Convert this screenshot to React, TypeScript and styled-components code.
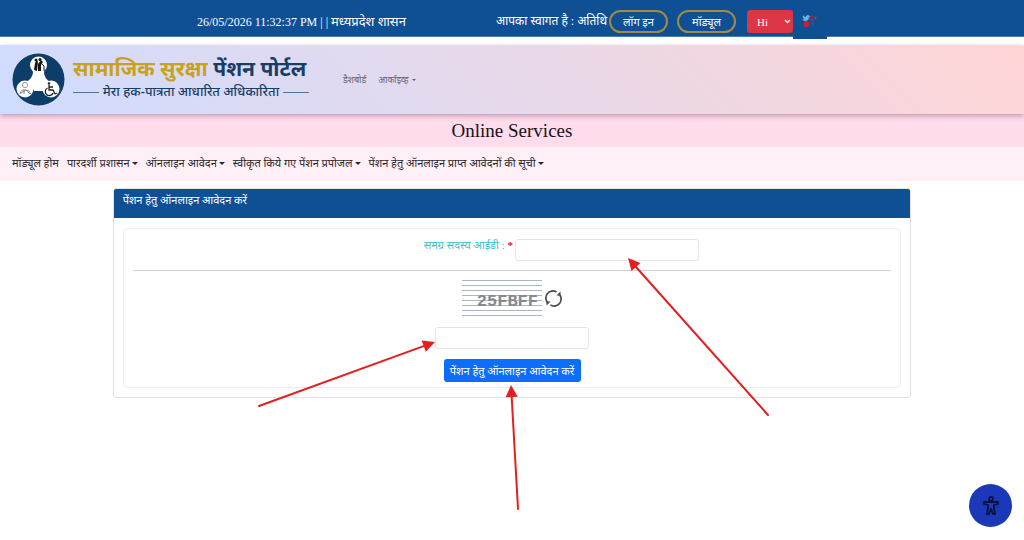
import React from "react";
import styled, { createGlobalStyle } from "styled-components";

const hindi = `"Noto Sans Devanagari", "Noto Sans", "Lohit Devanagari", sans-serif`;
const serif = `"Liberation Serif", "Noto Sans Devanagari", "Noto Sans", serif`;

const GlobalStyle = createGlobalStyle`
  *, *::before, *::after { box-sizing: border-box; }
  body { margin: 0; background: #fff; color: #212529; font-family: ${serif}; }
  button, input, select { font: inherit; margin: 0; }
`;

const Page = styled.div`
  position: relative;
  min-height: 100vh;
  overflow: hidden;
`;

const TopBar = styled.div`
  display: grid;
  grid-template-columns: 197fr 299fr 528fr;
  height: 37px;
  padding-top: 6px;
  background: #0f4f94;
  border-bottom: 1px solid #4b7cb0;
  color: #fff;
  font-size: 12px;
  white-space: nowrap;
`;

const Clock = styled.div`
  grid-column: 2;
  line-height: 31px;
`;

const StateName = styled.span`
  font-size: 13px;
`;

const Account = styled.div`
  display: flex;
  align-items: center;
  height: 31px;
`;

const Welcome = styled.span`
  width: 113px;
`;

const PillButton = styled.button`
  width: 59px;
  height: 23px;
  margin-right: 9px;
  padding: 0;
  border: 2px solid #a18a45;
  border-radius: 12px;
  background: transparent;
  color: #fff;
  font-size: 11px;
  line-height: 18px;
`;

const LanguageBox = styled.div`
  display: grid;
  align-items: center;
  margin-left: 2px;
  > * { grid-area: 1 / 1; }
  > svg { justify-self: end; margin-right: 2px; pointer-events: none; }
`;

const LanguageSelect = styled.select`
  appearance: none;
  width: 46px;
  height: 23px;
  padding: 0 10px;
  border: 0;
  border-radius: 3px;
  background: #dc3545;
  color: #fff;
  font-size: 11px;
`;

const Social = styled.a`
  align-self: flex-start;
  display: flex;
  justify-content: center;
  width: 34px;
  height: 33px;
  padding: 9px 0 0 0;
  background: #0f4f94;
`;

const Header = styled.header`
  display: flex;
  align-items: center;
  height: 69px;
  margin-top: 8px;
  padding: 0 12px;
  position: relative;
  background: linear-gradient(45deg, #cfdcff, #ffd5d5);
  box-shadow: 0 2px 5px rgba(80, 30, 60, 0.35);
`;

const Brand = styled.a`
  display: flex;
  align-items: center;
  width: 331px;
  color: #173e66;
  text-decoration: none;
`;

const BrandText = styled.span`
  display: flex;
  flex-direction: column;
  width: 236px;
  margin-left: 8px;
  font-family: ${hindi};
  white-space: nowrap;
`;

const BrandName = styled.span`
  font-size: 21px;
  font-weight: 700;
  line-height: 26px;
  em { color: #c8a11d; font-style: normal; }
`;

const Tagline = styled.span`
  display: flex;
  align-items: center;
  justify-content: space-between;
  gap: 4px;
  font-size: 13px;
  font-weight: 500;
  line-height: 18px;
  &::before, &::after { content: ""; flex: 1; height: 1px; background: #54739a; }
`;

const HeaderLinks = styled.nav`
  display: flex;
  gap: 12px;
  white-space: nowrap;
`;

const HeaderLink = styled.a<{ $menu?: boolean }>`
  display: flex;
  align-items: center;
  gap: 4px;
  color: #66616d;
  font-size: 9px;
  line-height: 14px;
  text-decoration: none;
  &::after {
    content: "";
    display: ${(p) => (p.$menu ? "block" : "none")};
    border: 2px solid transparent;
    border-top-color: currentColor;
    border-bottom: 0;
  }
`;

const Title = styled.h1`
  margin: 0;
  background: #ffdceb;
  color: #17121a;
  font-size: 19px;
  font-weight: 400;
  line-height: 33px;
  text-align: center;
`;

const MenuBar = styled.nav`
  display: flex;
  gap: 8px;
  height: 34px;
  padding: 0 12px;
  background: #fff0f7;
  white-space: nowrap;
`;

const MenuLink = styled.a<{ $menu?: boolean }>`
  display: flex;
  align-items: center;
  gap: 2px;
  color: #2b272b;
  font-size: 11px;
  line-height: 32px;
  height: 32px;
  text-decoration: none;
  &::after {
    content: "";
    display: ${(p) => (p.$menu ? "block" : "none")};
    border: 3px solid transparent;
    border-top-color: currentColor;
    border-bottom: 0;
  }
`;

const Card = styled.main`
  width: 78%;
  margin: 7px auto 0;
  border: 1px solid #e3e3e3;
  border-radius: 3px;
  overflow: hidden;
`;

const CardTitle = styled.h2`
  height: 29px;
  margin: 0;
  padding: 0 9px;
  background: #0f4f94;
  color: #fff;
  font-size: 11px;
  font-weight: 400;
  line-height: 23px;
`;

const Form = styled.form`
  display: flex;
  flex-direction: column;
  align-items: center;
  margin: 10px 9px 9px;
  padding: 10px 9px 5px;
  border: 1px solid #ececec;
  border-radius: 5px;
`;

const Field = styled.div`
  display: flex;
  align-items: flex-start;
  width: 100%;
  justify-content: center;
  padding: 0 0 9px 13%;
  margin-bottom: 9px;
  border-bottom: 1px solid #d0d0d2;
`;

const Label = styled.label`
  width: 91px;
  color: #3fc3d0;
  font-size: 11px;
  line-height: 12px;
  white-space: nowrap;
  b { color: #e0121b; }
`;

const TextBox = styled.input<{ $width: number }>`
  width: ${(p) => p.$width}px;
  height: 22px;
  padding: 0 6px;
  border: 1px solid #e2e5e9;
  border-radius: 3px;
  background: #fff;
  font-size: 11px;
`;

const CaptchaRow = styled.div`
  display: flex;
  align-items: center;
  gap: 3px;
  height: 36px;
  margin-bottom: 11px;
`;

const Captcha = styled.div`
  width: 80px;
  height: 36px;
  padding-right: 4px;
  background: repeating-linear-gradient(#a9b4c4 0 1px, transparent 1px 5px);
  color: #85888c;
  font: 700 17px/44px "Liberation Mono", monospace;
  text-align: right;
`;

const RefreshButton = styled.button`
  display: flex;
  padding: 0;
  border: 0;
  background: transparent;
`;

const SubmitButton = styled.button`
  height: 23px;
  width: 137px;
  margin-top: 10px;
  padding: 0;
  border: 0;
  border-radius: 3px;
  background: #0d6efd;
  color: #fff;
  font-size: 11px;
  line-height: 22px;
  white-space: nowrap;
`;

const AccessButton = styled.button`
  position: absolute;
  right: 12px;
  bottom: 13px;
  display: grid;
  place-items: center;
  width: 43px;
  height: 43px;
  padding: 0;
  border: 0;
  border-radius: 50%;
  background: #1a38b8;
`;

const Annotations = styled.svg`
  position: absolute;
  top: 0;
  left: calc(50% - 512px);
  pointer-events: none;
`;

const Logo = () => (
  <svg width="53" height="53" viewBox="0 0 53 53" aria-hidden="true">
    <circle cx="26.5" cy="26.5" r="26" fill="#0d3d69" />
    <path d="M21 16 H32 Q31 26 40 30 L37 37 Q31 34 31 38 H22 Q22 34 16 37 L12 30 Q22 26 21 16Z" fill="#fff" />
    <circle cx="26.5" cy="12" r="8.5" fill="#fff" />
    <circle cx="13" cy="36" r="8.5" fill="#fff" />
    <circle cx="39" cy="36" r="8.5" fill="#fff" />
    <path d="M22 17 L23 10 L25 7 L26 9 L25 18Z M26 18 L26 11 L29 7 L31 9 L29 12 L29 18Z" fill="#161616" />
    <circle cx="24" cy="7" r="1.5" fill="#161616" />
    <circle cx="28" cy="6.5" r="1.5" fill="#161616" />
    <path d="M30 11 L32 13 V18" fill="none" stroke="#161616" />
    <circle cx="13" cy="32" r="2.6" fill="none" stroke="#999" />
    <path d="M8 41 Q9 36 13 37 Q17 36 19 41 M9 40 L14 37 L18 41 M12 37 V41" fill="none" stroke="#888" />
    <circle cx="37" cy="30.5" r="1.3" fill="#202020" />
    <path d="M37 32 V37 H41 L43 41 L45 40 M37 34 H41 M35.5 35 A4 4 0 1 0 41 40" fill="none" stroke="#202020" strokeWidth="1.3" />
  </svg>
);

const SocialIcon = () => (
  <svg width="16" height="13" viewBox="0 0 16 13" aria-hidden="true">
    <path d="M1 0 Q2 2 4 2 Q4 0 6 0 L8 1 L7 3 Q6 6 3 6 L0 5 L2 4 Q0 2 1 0Z" fill="#62b8ec" />
    <circle cx="4.5" cy="9" r="3" fill="#d51b31" />
    <path d="M11 2 A2 2 0 1 0 11 4 H9.5 M12 3 H15 M13.5 1.5 V4.5" fill="none" stroke="#ad3550" />
    <path d="M11 12 V7 Q11 6 12 6 M9.5 8.5 H12" fill="none" stroke="#315ca5" />
  </svg>
);

const RefreshIcon = () => (
  <svg width="17" height="17" viewBox="0 0 17 17" fill="none" stroke="#4d4d4d" strokeWidth="1.7" aria-hidden="true">
    <path d="M3.2 13.2 A7 7 0 0 1 11.5 2 M13.8 3.8 A7 7 0 0 1 5.5 15" />
    <path d="M11.5 5.6 L15.8 5.8 L15.4 1.4Z M5.5 11.4 L1.2 11.2 L1.6 15.6Z" fill="#4d4d4d" stroke="none" />
  </svg>
);

const AccessIcon = () => (
  <svg width="18" height="20" viewBox="0 0 18 20" fill="none" stroke="#07123e" strokeWidth="1.8" strokeLinejoin="round" aria-hidden="true">
    <circle cx="9" cy="3" r="2" />
    <path d="M2 6 H16 V8 L12 9 V12 L13 18 H11 L9 13 L7 18 H5 L6 12 V9 L2 8Z" />
  </svg>
);

const arrows = [
  { x: 435, y: 342, tx: 259, ty: 406 },
  { x: 628, y: 258, tx: 768, ty: 415 },
  { x: 511, y: 385, tx: 518, ty: 509 },
];

const menu = [
  { text: "मॉड्यूल होम", menu: false },
  { text: "पारदर्शी प्रशासन", menu: true },
  { text: "ऑनलाइन आवेदन", menu: true },
  { text: "स्वीकृत किये गए पेंशन प्रपोजल", menu: true },
  { text: "पेंशन हेतु ऑनलाइन प्राप्त आवेदनों की सूची", menu: true },
];

export default function App() {
  return (
    <Page lang="hi">
      <GlobalStyle />
      <TopBar>
        <Clock>26/05/2026 11:32:37 PM | | <StateName>मध्यप्रदेश शासन</StateName></Clock>
        <Account>
          <Welcome>आपका स्वागत है : अतिथि</Welcome>
          <PillButton type="button">लॉग इन</PillButton>
          <PillButton type="button">मॉड्यूल</PillButton>
          <LanguageBox>
            <LanguageSelect aria-label="भाषा" defaultValue="hi">
              <option value="hi">Hi</option>
            </LanguageSelect>
            <svg width="7" height="5" viewBox="0 0 7 5" aria-hidden="true">
              <path d="M1 1 L3.5 3.5 L6 1" fill="none" stroke="#fff" strokeWidth="1.4" />
            </svg>
          </LanguageBox>
          <Social href="#" aria-label="सोशल मीडिया"><SocialIcon /></Social>
        </Account>
      </TopBar>
      <Header>
        <Brand href="#">
          <Logo />
          <BrandText>
            <BrandName><em>सामाजिक सुरक्षा</em> पेंशन पोर्टल</BrandName>
            <Tagline>मेरा हक-पात्रता आधारित अधिकारिता</Tagline>
          </BrandText>
        </Brand>
        <HeaderLinks>
          <HeaderLink href="#">डैशबोर्ड</HeaderLink>
          <HeaderLink href="#" $menu>आर्काइव्ह</HeaderLink>
        </HeaderLinks>
      </Header>
      <Title>Online Services</Title>
      <MenuBar>
        {menu.map((m) => (
          <MenuLink key={m.text} href="#" $menu={m.menu}>{m.text}</MenuLink>
        ))}
      </MenuBar>
      <Card>
        <CardTitle>पेंशन हेतु ऑनलाइन आवेदन करें</CardTitle>
        <Form onSubmit={(e) => e.preventDefault()}>
          <Field>
            <Label htmlFor="member">समग्र सदस्य आईडी : <b>*</b></Label>
            <TextBox id="member" $width={184} />
          </Field>
          <CaptchaRow>
            <Captcha>25FBFF</Captcha>
            <RefreshButton type="button" aria-label="Refresh"><RefreshIcon /></RefreshButton>
          </CaptchaRow>
          <TextBox aria-label="Captcha" $width={154} />
          <SubmitButton type="submit">पेंशन हेतु ऑनलाइन आवेदन करें</SubmitButton>
        </Form>
      </Card>
      <Annotations width="1024" height="540" viewBox="0 0 1024 540" aria-hidden="true">
        {arrows.map((a) => {
          const angle = (Math.atan2(a.y - a.ty, a.x - a.tx) * 180) / Math.PI;
          const length = Math.hypot(a.x - a.tx, a.y - a.ty);
          return (
            <g key={a.x} transform={`translate(${a.x} ${a.y}) rotate(${angle})`} fill="#e3201f" stroke="#e3201f">
              <path d={`M-10 0 H${-length}`} strokeWidth="2" strokeLinecap="round" />
              <path d="M0 0 L-12 -6 V6Z" stroke="none" />
            </g>
          );
        })}
      </Annotations>
      <AccessButton type="button" aria-label="Accessibility"><AccessIcon /></AccessButton>
    </Page>
  );
}
